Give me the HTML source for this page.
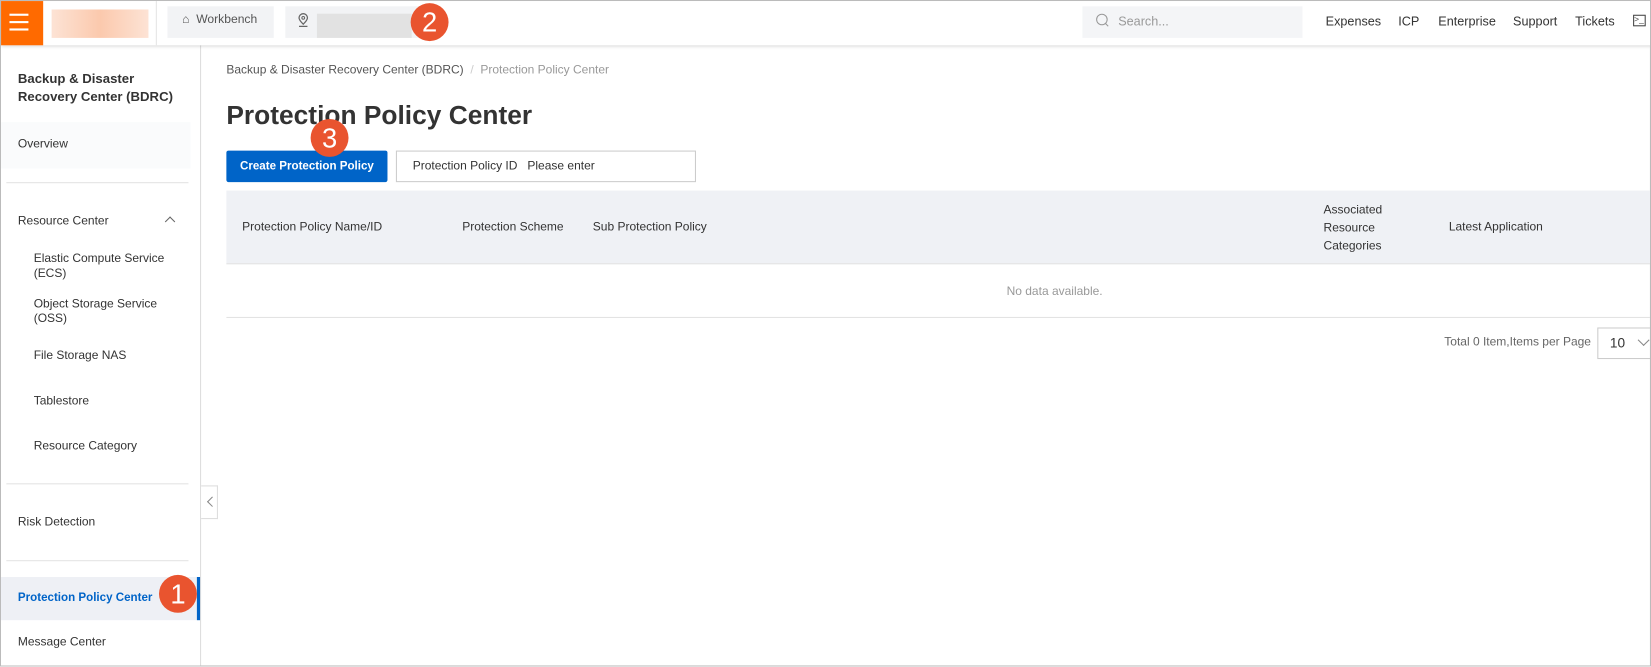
<!DOCTYPE html>
<html><head><meta charset="utf-8"><style>
*{box-sizing:border-box;margin:0;padding:0}
html,body{width:1651px;height:666px;overflow:hidden;background:#fff}
body{font-family:"Liberation Sans",Arial,sans-serif;color:#333}
#w{position:absolute;left:0;top:0;width:1568px;height:633px;transform:scale(1.05293);transform-origin:0 0;border:1px solid #bbb;background:#fff;overflow:hidden}
.a{position:absolute;white-space:nowrap}
.badge{position:absolute;width:36px;height:36px;border-radius:50%;background:#e9542f;color:#fff;font-size:26px;text-align:center;line-height:36px}
.nav{font-size:12px;color:#333}
.side{font-size:11.4px;color:#333}
.th{font-size:11.4px;color:#333}
</style></head><body><div id="w">
<div class="a" style="left:0;top:0;width:1568px;height:42px;background:#fff;box-shadow:0 1px 3px rgba(0,0,0,.15);z-index:2">
 <div class="a" style="left:0;top:0;width:40px;height:42px;background:#ff6a00">
  <div class="a" style="left:8px;top:12px;width:18px;height:2px;background:#fff"></div>
  <div class="a" style="left:8px;top:19px;width:18px;height:2px;background:#fff"></div>
  <div class="a" style="left:8px;top:26px;width:18px;height:2px;background:#fff"></div>
 </div>
 <div class="a" style="left:48px;top:8px;width:92px;height:27px;background:linear-gradient(90deg,#fde3d5,#fbc9ad 50%,#fde3d5)"></div>
 <div class="a" style="left:147px;top:0;width:1px;height:42px;background:#e5e5e5"></div>
 <div class="a" style="left:158px;top:5px;width:101px;height:30px;background:#f2f3f5"></div>
 <div class="a nav" style="left:172px;top:12px;color:#555;font-size:11.5px">⌂&nbsp; Workbench</div>
 <div class="a" style="left:270px;top:5px;width:130px;height:30px;background:#f2f3f5"></div>
 <svg class="a" style="left:281px;top:11px" width="12" height="14" viewBox="0 0 12 14"><path d="M6 11C3 8 2 6.5 2 5a4 4 0 0 1 8 0c0 1.5-1 3-4 6z" fill="none" stroke="#666" stroke-width="1.2"/><circle cx="6" cy="5" r="1.3" fill="none" stroke="#666"/><path d="M2 13h8" stroke="#666" stroke-width="1.2"/></svg>
 <div class="a" style="left:300px;top:12px;width:90px;height:23px;background:#e2e2e2"></div>
 <div class="badge" style="left:389px;top:2px">2</div>
 <div class="a" style="left:1027px;top:5px;width:209px;height:30px;background:#f4f5f7"></div>
 <div class="a" style="left:1040px;top:12px;width:11px;height:11px;border:1.3px solid #999;border-radius:50%"></div>
 <div class="a" style="left:1048px;top:22px;width:4px;height:1.3px;background:#999;transform:rotate(45deg)"></div>
 <div class="a nav" style="left:1061px;top:12px;color:#999">Search...</div>
 <div class="a nav" style="left:1258px;top:12px">Expenses</div>
 <div class="a nav" style="left:1327px;top:12px">ICP</div>
 <div class="a nav" style="left:1365px;top:12px">Enterprise</div>
 <div class="a nav" style="left:1436px;top:12px">Support</div>
 <div class="a nav" style="left:1495px;top:12px">Tickets</div>
 <div class="a" style="left:1550px;top:13px;width:12px;height:11px;border:1.2px solid #444;font-size:8px;line-height:8px;color:#444">&gt;_</div>
</div>
<div class="a" style="left:0;top:42px;width:190px;height:591px;border-right:1px solid #ddd;background:#fff">
 <div class="a" style="left:16px;top:24px;font-size:12.5px;font-weight:bold;line-height:17px;color:#333">Backup &amp; Disaster<br>Recovery Center (BDRC)</div>
 <div class="a" style="left:0;top:73px;width:180px;height:44px;background:#fafbfc"></div>
 <div class="a side" style="left:16px;top:88px">Overview</div>
 <div class="a" style="left:5px;top:130px;width:173px;height:1px;background:#e3e3e3"></div>
 <div class="a side" style="left:16px;top:161px">Resource Center</div>
 <div class="a" style="left:157px;top:164px;width:7px;height:7px;border-left:1.2px solid #666;border-top:1.2px solid #666;transform:rotate(45deg)"></div>
 <div class="a side" style="left:31px;top:196px;line-height:14px">Elastic Compute Service<br>(ECS)</div>
 <div class="a side" style="left:31px;top:239px;line-height:14px">Object Storage Service<br>(OSS)</div>
 <div class="a side" style="left:31px;top:289px">File Storage NAS</div>
 <div class="a side" style="left:31px;top:332px">Tablestore</div>
 <div class="a side" style="left:31px;top:375px">Resource Category</div>
 <div class="a" style="left:5px;top:416px;width:173px;height:1px;background:#e3e3e3"></div>
 <div class="a side" style="left:16px;top:447px">Risk Detection</div>
 <div class="a" style="left:5px;top:489px;width:173px;height:1px;background:#e3e3e3"></div>
 <div class="a" style="left:0;top:505px;width:189px;height:41px;background:#eef0f5;border-right:3px solid #0064c8"></div>
 <div class="a side" style="left:16px;top:519px;color:#0064c8;font-weight:bold;font-size:11px">Protection Policy Center</div>
 <div class="badge" style="left:150px;top:503px">1</div>
 <div class="a side" style="left:16px;top:561px">Message Center</div>
</div>
<div class="a" style="left:190px;top:460px;width:16px;height:32px;border:1px solid #ddd;border-left:none;background:#fff"></div>
<div class="a" style="left:197px;top:472px;width:7px;height:7px;border-left:1.2px solid #888;border-bottom:1.2px solid #888;transform:rotate(45deg)"></div>
<div class="a" style="left:214px;top:60px;font-size:11.4px;color:#555">Backup &amp; Disaster Recovery Center (BDRC) <span style="color:#ccc">&nbsp;/&nbsp;</span> <span style="color:#999">Protection Policy Center</span></div>
<div class="a" style="left:214px;top:95px;font-size:25px;font-weight:bold;color:#333">Protection Policy Center</div>
<div class="a" style="left:214px;top:142px;width:153px;height:30px;background:#0064c8;border-radius:2px;color:#fff;font-size:11px;font-weight:bold;text-align:center;line-height:30px">Create Protection Policy</div>
<div class="badge" style="left:294px;top:112px">3</div>
<div class="a" style="left:375px;top:142px;width:285px;height:30px;border:1px solid #ccc;font-size:11.4px;line-height:28px;padding-left:15px;color:#333">Protection Policy ID &nbsp;&nbsp;Please enter</div>
<div class="a" style="left:214px;top:180px;width:1354px;height:70px;background:#eff1f5;border-bottom:1px solid #e3e3e3"></div>
<div class="a th" style="left:229px;top:209px">Protection Policy Name/ID</div>
<div class="a th" style="left:438px;top:209px">Protection Scheme</div>
<div class="a th" style="left:562px;top:209px">Sub Protection Policy</div>
<div class="a th" style="left:1256px;top:191px;line-height:17px">Associated<br>Resource<br>Categories</div>
<div class="a th" style="left:1375px;top:209px">Latest Application</div>
<div class="a" style="left:955px;top:270px;font-size:11.4px;color:#999">No data available.</div>
<div class="a" style="left:214px;top:300px;width:1354px;height:1px;background:#e3e3e3"></div>
<div class="a" style="right:56px;top:318px;font-size:11.4px;color:#666">Total 0 Item,Items per Page</div>
<div class="a" style="left:1516px;top:310px;width:60px;height:30px;border:1px solid #ccc;font-size:13px;line-height:28px;padding-left:11px">10</div>
<div class="a" style="left:1556px;top:318px;width:8px;height:8px;border-right:1.2px solid #888;border-bottom:1.2px solid #888;transform:rotate(45deg)"></div>
</div></body></html>
